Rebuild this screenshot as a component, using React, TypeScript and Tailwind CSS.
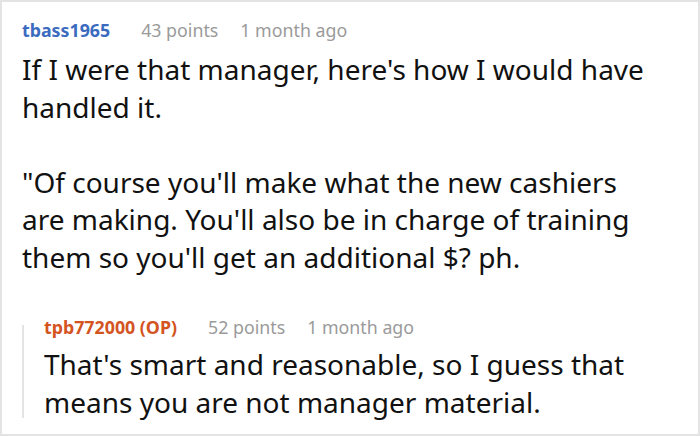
import React from "react";

const Lines = ({ lines }: { lines: string[] }) => (
  <>
    {lines.map((l, i) => (
      <span key={i} className="block whitespace-nowrap">
        {l}
      </span>
    ))}
  </>
);

export default function App() {
  return (
    <div className="w-[700px] h-[436px] bg-white border-2 border-[#e3e3e3] overflow-hidden font-['Noto_Sans',sans-serif]">
      <div className="pl-[20px] pr-[14px] pt-[13px]">
        <div className="flex items-baseline text-[17.8px] leading-[30px] whitespace-nowrap">
          <span className="font-bold text-[#3b6bbf]">tbass1965</span>
          <span className="ml-[31px] text-[#9a9a9a]">43 points</span>
          <span className="ml-[22px] text-[#9a9a9a]">1 month ago</span>
        </div>
        <div className="text-[28px] leading-[37.5px] text-[#111] mt-[6px]">
          <p>
            <Lines lines={["If I were that manager, here's how I would have", "handled it."]} />
          </p>
          <p className="mt-[37.5px]">
            <Lines
              lines={[
                "\"Of course you'll make what the new cashiers",
                "are making. You'll also be in charge of training",
                "them so you'll get an additional $? ph.",
              ]}
            />
          </p>
        </div>
        <div className="mt-[36px] flex">
          <div className="w-[2px] bg-[#e4e4e4] mt-[13px] mb-[3px] shrink-0" />
          <div className="pl-[20px]">
            <div className="flex items-baseline text-[17.8px] leading-[30px] whitespace-nowrap">
              <span className="font-bold text-[#d4541f]">tpb772000 (OP)</span>
              <span className="ml-[31px] text-[#9a9a9a]">52 points</span>
              <span className="ml-[22px] text-[#9a9a9a]">1 month ago</span>
            </div>
            <div className="text-[28px] leading-[37.5px] text-[#111] mt-[4px]">
              <p>
                <Lines lines={["That's smart and reasonable, so I guess that", "means you are not manager material."]} />
              </p>
            </div>
          </div>
        </div>
      </div>
    </div>
  );
}
